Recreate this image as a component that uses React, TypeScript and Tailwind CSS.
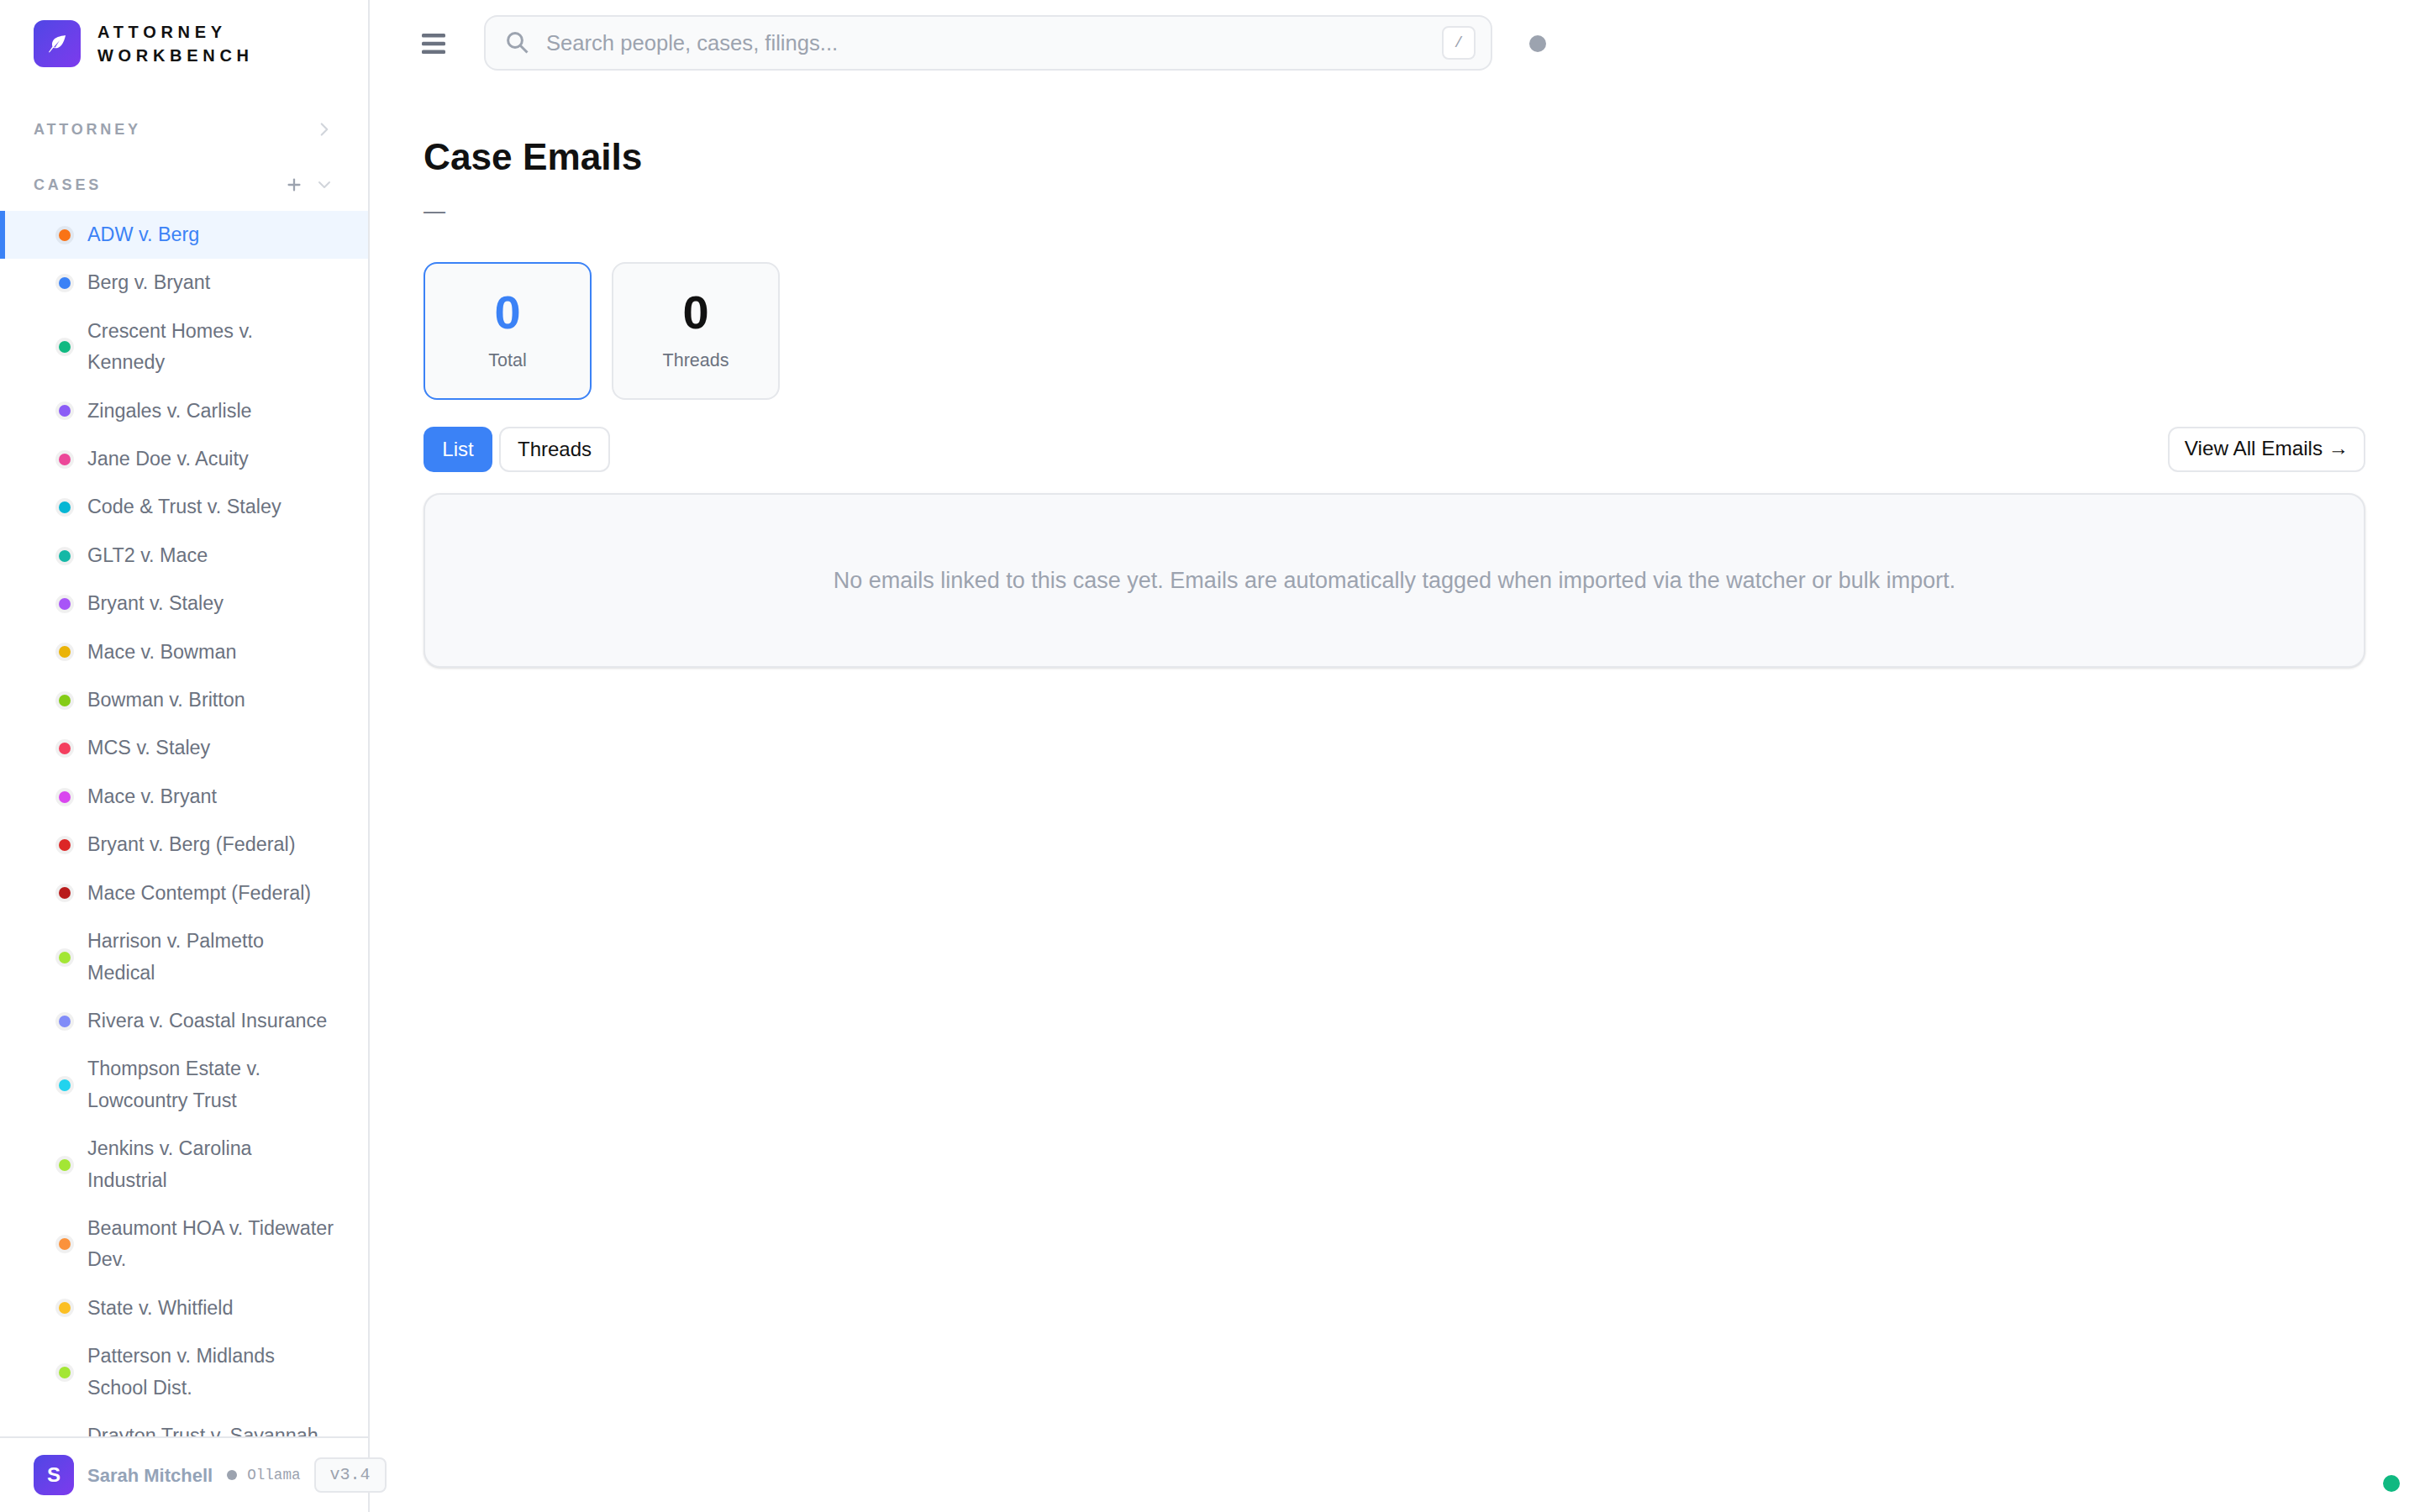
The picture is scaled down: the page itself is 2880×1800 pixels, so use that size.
import React from 'react';
import { ChevronDown, ChevronRight, Plus } from 'lucide-react';

const cases = [
    { name: 'ADW v. Berg', color: 'bg-[#f97316]' },
    { name: 'Berg v. Bryant', color: 'bg-[#3b82f6]' },
    { name: 'Crescent Homes v. Kennedy', color: 'bg-[#10b981]' },
    { name: 'Zingales v. Carlisle', color: 'bg-[#8b5cf6]' },
    { name: 'Jane Doe v. Acuity', color: 'bg-[#ec4899]' },
    { name: 'Code & Trust v. Staley', color: 'bg-[#06b6d4]' },
    { name: 'GLT2 v. Mace', color: 'bg-[#14b8a6]' },
    { name: 'Bryant v. Staley', color: 'bg-[#a855f7]' },
    { name: 'Mace v. Bowman', color: 'bg-[#eab308]' },
    { name: 'Bowman v. Britton', color: 'bg-[#84cc16]' },
    { name: 'MCS v. Staley', color: 'bg-[#f43f5e]' },
    { name: 'Mace v. Bryant', color: 'bg-[#d946ef]' },
    { name: 'Bryant v. Berg (Federal)', color: 'bg-[#dc2626]' },
    { name: 'Mace Contempt (Federal)', color: 'bg-[#b91c1c]' },
    { name: 'Harrison v. Palmetto Medical', color: 'bg-[#a3e635]' },
    { name: 'Rivera v. Coastal Insurance', color: 'bg-[#818cf8]' },
    { name: 'Thompson Estate v. Lowcountry Trust', color: 'bg-[#22d3ee]' },
    { name: 'Jenkins v. Carolina Industrial', color: 'bg-[#a3e635]' },
    { name: 'Beaumont HOA v. Tidewater Dev.', color: 'bg-[#fb923c]' },
    { name: 'State v. Whitfield', color: 'bg-[#fbbf24]' },
    { name: 'Patterson v. Midlands School Dist.', color: 'bg-[#a3e635]' },
    { name: 'Drayton Trust v. Savannah Port', color: 'bg-[#38bdf8]' },
];

const App: React.FC = () => {
    return (
        <div className="flex h-screen w-full bg-white font-['Liberation_Sans',Arial,sans-serif] text-[#111111]">
            <aside className="flex h-full w-[440px] shrink-0 flex-col border-r-2 border-[#e5e7eb]">
                <div className="flex items-center gap-5 pl-10 pt-6">
                    <div className="flex h-14 w-14 items-center justify-center rounded-xl bg-gradient-to-br from-[#4f46e5] to-[#7c3aed]">
                        <svg viewBox="0 0 24 24" className="h-[24px] w-[24px]" fill="white">
                            <path d="M22 2c-7 1-12.500 2.500-14.800 6.200C5.600 10.800 5.800 13.400 6.400 15.400L2 22l.8.4 4.700-5.700c2.300 1.100 5.300.8 7.800-1.200C18.500 13 20.800 8 22 2zM8.200 16l6.800-8-5.300 8.600c-.5 0-1-.2-1.500-.6z" />
                        </svg>
                    </div>
                    <div className="-mt-[1px] text-[20px] font-bold uppercase leading-[28px] tracking-[5.7px]">
                        Attorney<br />Workbench
                    </div>
                </div>

                <div className="mt-[61px] flex h-[26px] items-center justify-between pl-10 pr-[39px] text-[#9ca3af]">
                    <span className="text-[18px] font-bold uppercase tracking-[3.8px]">Attorney</span>
                    <ChevronRight size={26} strokeWidth={2} className="text-[#d1d5db]" />
                </div>

                <div className="mt-10 flex h-[26px] items-center justify-between pl-10 pr-[40px] text-[#9ca3af]">
                    <span className="text-[18px] font-bold uppercase tracking-[3.8px]">Cases</span>
                    <div className="flex items-center gap-[13px]">
                        <Plus size={22} strokeWidth={2.5} />
                        <ChevronDown size={24} strokeWidth={2} className="text-[#d1d5db]" />
                    </div>
                </div>

                <div className="mt-[18px] min-h-0 flex-1 overflow-hidden">
                    {cases.map((c, i) => (
                        <div
                            key={c.name}
                            className={`flex items-center gap-5 border-l-[6px] py-[10px] pl-16 pr-[39px] text-[23.36px] leading-[37.4px] ${i === 0 ? 'border-[#3b82f6] bg-[#eff6ff] text-[#3b82f6]' : 'border-transparent text-[#6b7280]'}`}
                        >
                            <span className={`h-[14px] w-[14px] shrink-0 rounded-full ring-4 ring-black/[0.06] ${c.color}`} />
                            <span>{c.name}</span>
                        </div>
                    ))}
                </div>

                <div className="flex h-[90px] shrink-0 items-center border-t-2 border-[#e5e7eb] pl-10">
                    <div className="flex h-12 w-12 shrink-0 items-center justify-center rounded-xl bg-gradient-to-br from-[#4f46e5] to-[#7c3aed] text-[24px] font-bold text-white">
                        S
                    </div>
                    <span className="ml-4 whitespace-nowrap text-[22px] font-bold text-[#94a3b8]">Sarah Mitchell</span>
                    <span className="ml-[17px] h-3 w-3 shrink-0 rounded-full bg-[#9ca3af]" />
                    <span className="ml-3 font-['Liberation_Mono',monospace] text-[17.6px] text-[#9ca3af]">Ollama</span>
                    <span className="ml-4 shrink-0 rounded-lg border-2 border-[#e5e7eb] bg-[#f9fafb] px-[17px] py-[6px] font-['Liberation_Mono',monospace] text-[20px] leading-[26px] text-[#9ca3af]">
                        v3.4
                    </span>
                </div>
            </aside>

            <main className="min-w-0 flex-1">
                <div className="flex h-[102px] items-center pl-[62px]">
                    <svg viewBox="0 0 28 24" className="mt-[2px] h-6 w-7 text-[#6b7280]" fill="currentColor">
                        <rect x="0" y="0" width="28" height="4.400" rx="1.500" />
                        <rect x="0" y="9.800" width="28" height="4.400" rx="1.500" />
                        <rect x="0" y="19.600" width="28" height="4.400" rx="1.500" />
                    </svg>
                    <div className="ml-[46px] flex h-[66px] w-[1200px] items-center rounded-2xl border-2 border-[#e5e7eb] bg-[#f9fafb] pl-[25px] pr-[18px]">
                        <svg viewBox="0 0 26 26" className="h-[26px] w-[26px] text-[#9ca3af]" fill="none" stroke="currentColor" strokeWidth="3">
                            <circle cx="10" cy="10" r="8.400" />
                            <path d="M16 16l8.500 8.500" />
                        </svg>
                        <span className="ml-[21px] flex-1 text-[25.6px] text-[#9ca3af]">Search people, cases, filings...</span>
                        <span className="flex h-10 w-10 items-center justify-center rounded-lg border-2 border-[#e5e7eb] bg-white font-['Liberation_Mono',monospace] text-[18px] text-[#9ca3af]">/</span>
                    </div>
                    <span className="ml-[44px] mt-[2px] h-5 w-5 rounded-full bg-[#9ca3af]" />
                </div>

                <div className="pl-16 pr-[65px]">
                    <h1 className="mt-[59px] text-[44.2px] font-bold leading-[52px]">Case Emails</h1>
                    <div className="mt-[18px] text-[26px] leading-[40px] text-[#6b7280]">—</div>

                    <div className="mt-[41px] flex gap-6">
                        <div className="flex h-[164px] w-[200px] flex-col items-center rounded-2xl border-2 border-[#3b82f6] bg-[#f9fafb] pt-[28px]">
                            <div className="text-[56px] font-bold leading-[60px] text-[#3b82f6]">0</div>
                            <div className="mt-[11px] text-[21.5px] leading-[32px] text-[#6b7280]">Total</div>
                        </div>
                        <div className="flex h-[164px] w-[200px] flex-col items-center rounded-2xl border-2 border-[#e5e7eb] bg-[#f9fafb] pt-[28px]">
                            <div className="text-[56px] font-bold leading-[60px]">0</div>
                            <div className="mt-[11px] text-[21.5px] leading-[32px] text-[#6b7280]">Threads</div>
                        </div>
                    </div>

                    <div className="mt-[32px] flex items-center justify-between">
                        <div className="flex gap-2">
                            <div className="flex h-[54px] w-[82px] items-center justify-center rounded-xl bg-[#3b82f6] pb-[1px] text-[24px] text-white">List</div>
                            <div className="flex h-[54px] w-[132px] items-center justify-center rounded-xl border-2 border-[#e5e7eb] bg-white pb-[1px] text-[24px]">Threads</div>
                        </div>
                        <div className="flex h-[54px] w-[235px] items-center justify-center rounded-xl border-2 border-[#e5e7eb] bg-white pb-[1px] text-[24.3px]">View All Emails →</div>
                    </div>

                    <div className="mt-[25px] flex h-[208px] items-center justify-center rounded-[20px] border-2 border-[#e5e7eb] bg-[#f8f9fb] text-[27px] text-[#9ca3af] shadow-sm">
                        No emails linked to this case yet. Emails are automatically tagged when imported via the watcher or bulk import.
                    </div>
                </div>
            </main>

            <span className="fixed bottom-6 right-6 h-5 w-5 rounded-full bg-[#10b981]" />
        </div>
    );
};

export default App;
